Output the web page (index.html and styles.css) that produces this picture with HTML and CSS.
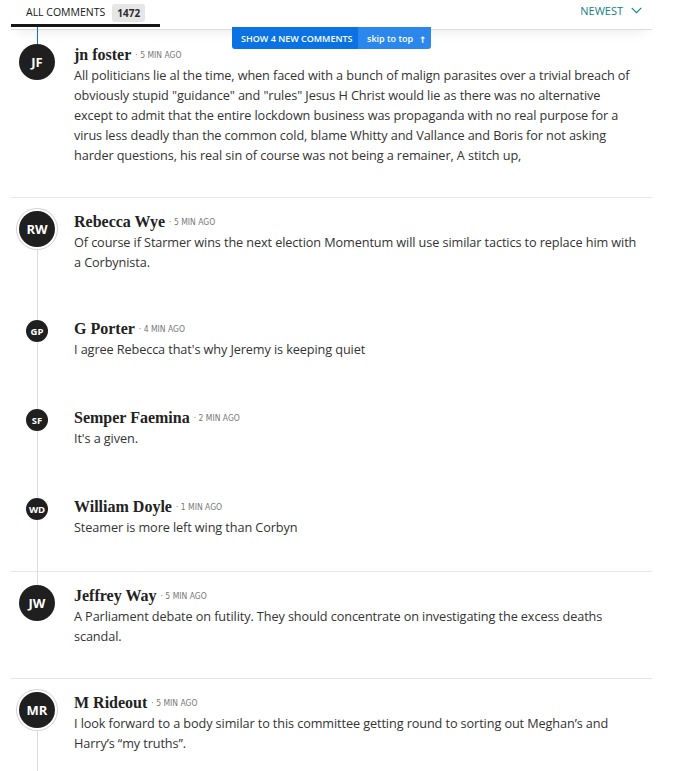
FILE: index.html
```html
<!DOCTYPE html>
<html lang="en">
<head>
<meta charset="utf-8">
<title>Comments</title>
<link rel="stylesheet" href="styles.css">
</head>
<body>
<div class="page">
  <header class="tabs">
    <div class="tab"><span class="tab-label">ALL COMMENTS</span><span class="count">1472</span></div>
    <div class="sort"><span>NEWEST</span>
      <svg class="chev" width="11" height="7" viewBox="0 0 11 7"><polyline points="0.7,0.8 5.5,5.6 10.3,0.8" fill="none" stroke="#127f8c" stroke-width="1.1"/></svg>
    </div>
  </header>

  <div class="newbar">
    <span class="show">SHOW 4 NEW COMMENTS</span>
    <span class="skip">skip to top <span class="arrow">&#8593;</span></span>
  </div>

  <ol class="comments">
    <li class="comment is-new">
      <div class="row">
        <div class="avatar-col"><span class="avatar">JF</span></div>
        <div class="content">
          <div class="meta"><span class="name">jn foster</span><span class="time">· 5 MIN AGO</span></div>
          <p class="body">All politicians lie al the time, when faced with a bunch of malign parasites over a trivial breach of obviously stupid "guidance" and "rules" Jesus H Christ would lie as there was no alternative except to admit that the entire lockdown business was propaganda with no real purpose for a virus less deadly than the common cold, blame Whitty and Vallance and Boris for not asking harder questions, his real sin of course was not being a remainer, A stitch up,</p>
        </div>
      </div>
    </li>

    <li class="comment threaded">
      <div class="row">
        <div class="avatar-col"><span class="avatar ring">RW</span></div>
        <div class="content">
          <div class="meta"><span class="name">Rebecca Wye</span><span class="time">· 5 MIN AGO</span></div>
          <p class="body">Of course if Starmer wins the next election Momentum will use similar tactics to replace him with a Corbynista.</p>
        </div>
      </div>
      <ol class="replies">
        <li class="row">
          <div class="avatar-col"><span class="avatar small">GP</span></div>
          <div class="content">
            <div class="meta"><span class="name">G Porter</span><span class="time">· 4 MIN AGO</span></div>
            <p class="body">I agree Rebecca that's why Jeremy is keeping quiet</p>
          </div>
        </li>
        <li class="row">
          <div class="avatar-col"><span class="avatar small">SF</span></div>
          <div class="content">
            <div class="meta"><span class="name">Semper Faemina</span><span class="time">· 2 MIN AGO</span></div>
            <p class="body">It's a given.</p>
          </div>
        </li>
        <li class="row">
          <div class="avatar-col"><span class="avatar small">WD</span></div>
          <div class="content">
            <div class="meta"><span class="name">William Doyle</span><span class="time">· 1 MIN AGO</span></div>
            <p class="body">Steamer is more left wing than Corbyn</p>
          </div>
        </li>
      </ol>
    </li>

    <li class="comment">
      <div class="row">
        <div class="avatar-col"><span class="avatar">JW</span></div>
        <div class="content">
          <div class="meta"><span class="name">Jeffrey Way</span><span class="time">· 5 MIN AGO</span></div>
          <p class="body">A Parliament debate on futility. They should concentrate on investigating the excess deaths scandal.</p>
        </div>
      </div>
    </li>

    <li class="comment threaded open">
      <div class="row">
        <div class="avatar-col"><span class="avatar ring">MR</span></div>
        <div class="content">
          <div class="meta"><span class="name">M Rideout</span><span class="time">· 5 MIN AGO</span></div>
          <p class="body">I look forward to a body similar to this committee getting round to sorting out Meghan’s and Harry’s “my truths”.</p>
        </div>
      </div>
    </li>
  </ol>
</div>
</body>
</html>
```

FILE: styles.css
```css
* { box-sizing: border-box; }

body {
  margin: 0;
  background: #fff;
  font-family: "Open Sans", "DejaVu Sans", sans-serif;
  color: #333;
}

.page {
  position: relative;
  margin-left: 11px;
  width: 641px;
}

/* header */
.tabs {
  position: relative;
  z-index: 1;
  display: flex;
  justify-content: space-between;
  align-items: flex-start;
  height: 30px;
  background: #fff;
  border-bottom: 1px solid #dedede;
  box-shadow: 0 8px 12px -6px rgba(0, 0, 0, 0.08);
}

.tab {
  display: flex;
  align-items: center;
  gap: 7px;
  width: 149px;
  height: 27px;
  padding: 2px 0 0 15px;
  border-bottom: 3px solid #161616;
}

.tab-label {
  font-size: 10.5px;
  color: #161616;
  padding-bottom: 3px;
}

.count {
  height: 18px;
  line-height: 18px;
  padding: 0 5px;
  border-radius: 3px;
  background: #e6e6e6;
  color: #2a2a2a;
  font-size: 10px;
  font-weight: 700;
}

.sort {
  display: flex;
  align-items: center;
  gap: 8px;
  height: 20px;
  padding-right: 10px;
  color: #127f8c;
  font-size: 11px;
}

.chev { display: block; margin-top: 1px; }

/* new comments bar */
.newbar {
  position: absolute;
  z-index: 3;
  left: 221px;
  top: 27px;
  display: flex;
  height: 22px;
  border-radius: 0 0 3px 3px;
  overflow: hidden;
  color: #fff;
  font-size: 9px;
  font-weight: 600;
}

.show {
  display: flex;
  align-items: center;
  width: 126px;
  padding-left: 9px;
  background: #0a72e2;
}

.skip {
  display: flex;
  align-items: center;
  width: 73px;
  padding-left: 9px;
  background: #2b87eb;
}

.arrow {
  margin-left: 6px;
  font-size: 9px;
  margin-top: 2px;
}

/* comments */
.comments,
.replies {
  list-style: none;
  margin: 0;
  padding: 0;
}

.comment {
  position: relative;
  padding: 13px 0 32px;
  border-bottom: 1px solid #e6e6e6;
}

.comment:first-child { padding-top: 14px; }

.comment.is-new::before {
  content: "";
  position: absolute;
  z-index: 2;
  left: 26px;
  top: -3px;
  width: 1px;
  height: 17px;
  background: #0a72e2;
}

.comment.threaded::before {
  content: "";
  position: absolute;
  left: 26px;
  top: 52px;
  bottom: -15px;
  width: 1px;
  background: #dcdcdc;
}

.comment.open { padding-bottom: 60px; }
.comment.open::before { bottom: 0; }

.row {
  display: flex;
  gap: 19px;
}

.avatar-col {
  position: relative;
  z-index: 1;
  flex: none;
  width: 36px;
  margin-left: 8px;
  display: flex;
  justify-content: center;
  align-items: flex-start;
}

.avatar {
  display: flex;
  align-items: center;
  justify-content: center;
  width: 36px;
  height: 36px;
  border-radius: 50%;
  background: #1f1f1f;
  color: #fff;
  font-size: 13px;
  font-weight: 700;
}

.avatar.ring {
  box-shadow: 0 0 0 2px #fff, 0 0 0 3px #d4d4d4;
}

.avatar.small {
  width: 22px;
  height: 22px;
  margin-top: 2px;
  font-size: 9.5px;
}

.content {
  flex: 1;
  min-width: 0;
  padding-right: 10px;
}

.meta {
  height: 21px;
  line-height: 21px;
  white-space: nowrap;
}

.name {
  font-family: "Liberation Serif", "Times New Roman", serif;
  font-weight: 700;
  font-size: 16px;
  color: #222;
}

.time {
  margin-left: 4px;
  font-family: "DejaVu Sans Condensed", "Liberation Sans", sans-serif;
  font-stretch: condensed;
  font-size: 8.5px;
  color: #777;
  vertical-align: 2px;
}

.body {
  margin: 0;
  font-size: 12.7px;
  letter-spacing: -0.1px;
  line-height: 20px;
  color: #333;
}

.replies {
  display: flex;
  flex-direction: column;
  gap: 48px;
  padding: 46px 0 2px;
}
```
